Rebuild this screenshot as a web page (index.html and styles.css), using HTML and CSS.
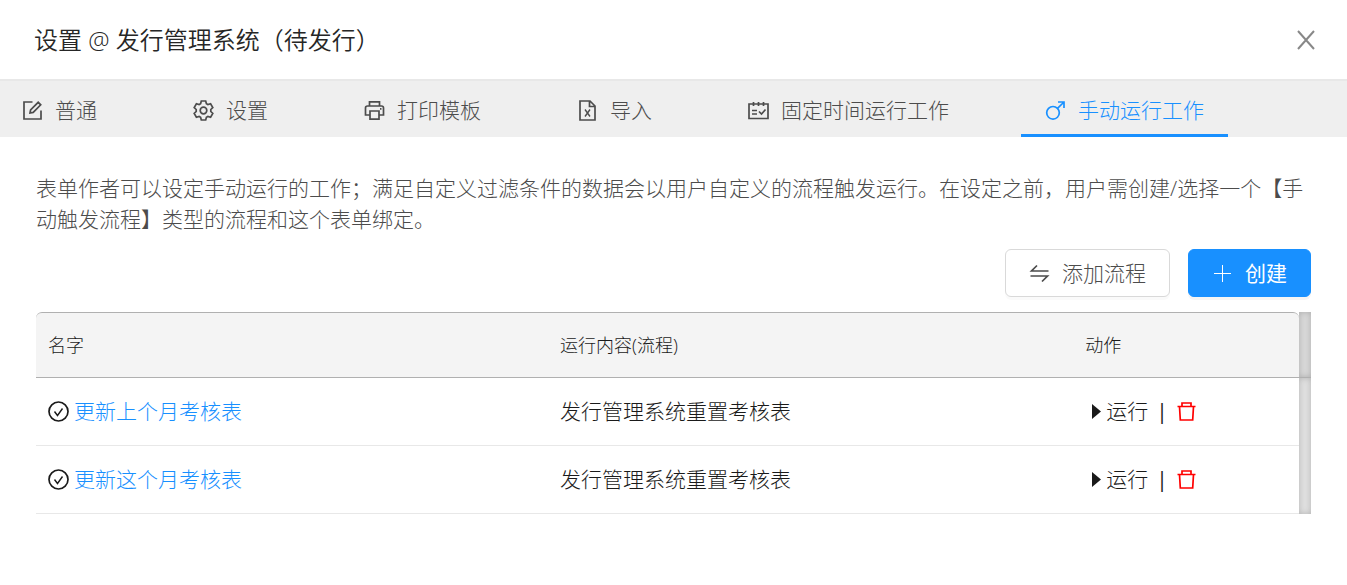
FILE: index.html
```html
<!DOCTYPE html>
<html lang="zh-CN">
<head>
    <meta charset="UTF-8">
    <meta name="viewport" content="width=device-width, initial-scale=1.0">
    <title>设置 @ 发行管理系统（待发行）</title>
    <link rel="stylesheet" href="styles.css">
</head>
<body>
    <header class="header">
        <h1>设置 @ 发行管理系统（待发行）</h1>
        <button class="close" type="button" aria-label="关闭">
            <svg viewBox="0 0 20 20"><path d="M2 1L18 19M18 1L2 19"/></svg>
        </button>
    </header>

    <nav class="tabs">
        <a class="tab" href="#general">
            <svg class="icon" viewBox="0 0 21 21"><path d="M10.500 2H2v17h17v-8.500M8 13l.6-3.200L16.200 2.300l2.500 2.500-7.500 7.600z"/></svg>
            普通
        </a>
        <a class="tab" href="#settings">
            <svg class="icon" viewBox="0 0 21 21"><path d="M8.300 1h4.400l.7 2.700 1.500.9 2.700-.8 2.200 3.700-2 2v2l2 2-2.200 3.700-2.700-.8-1.500.9-.7 2.700H8.300l-.7-2.700-1.500-.9-2.700.8-2.200-3.700 2-2v-2l-2-2 2.200-3.700 2.700.8 1.500-.9z"/><circle cx="10.500" cy="10.500" r="3.300"/></svg>
            设置
        </a>
        <a class="tab" href="#print">
            <svg class="icon" viewBox="0 0 21 21"><path d="M5.500 6V1.800h10V6M5.500 15H1.500V8q0-2 2-2h14q2 0 2 2v7h-4M6 11h9v8.200H6z"/><path d="M16 8.800h1.500"/></svg>
            打印模板
        </a>
        <a class="tab" href="#import">
            <svg class="icon" viewBox="0 0 21 21"><path d="M3 1h10l5 5v14H3zM12.500 1v5.500H18"/><path class="fine" d="M8 9.500l5 7M13 9.500l-5 7"/></svg>
            导入
        </a>
        <a class="tab" href="#schedule">
            <svg class="icon" viewBox="0 0 21 21"><path d="M1 4h19v14.500H1zM5.500 2v4M10.500 2v4M15.500 2v4M4 10.500h5M4 14h5M11 11.500l2.500 2.500 4-4.500"/></svg>
            固定时间运行工作
        </a>
        <a class="tab active" href="#manual" aria-current="page">
            <svg class="icon" viewBox="0 0 21 21"><circle cx="8" cy="12.800" r="6.300"/><path d="M12.500 8.300L19 2M13 2h6v6"/></svg>
            手动运行工作
        </a>
    </nav>

    <main class="content">
        <p class="description">表单作者可以设定手动运行的工作；满足自定义过滤条件的数据会以用户自定义的流程触发运行。在设定之前，用户需创建/选择一个【手动触发流程】类型的流程和这个表单绑定。</p>

        <div class="toolbar">
            <button class="btn" type="button">
                <svg class="icon" viewBox="0 0 21 21"><path d="M19.500 8H2.500L8 2.500M1.500 13h17L13 18.500"/></svg>
                添加流程
            </button>
            <button class="btn primary" type="button">
                <svg class="icon thin" viewBox="0 0 21 21"><path d="M10.500 2v17M2 10.500h17"/></svg>
                创建
            </button>
        </div>

        <table class="jobs">
            <thead>
                <tr>
                    <th class="name">名字</th>
                    <th class="flow">运行内容(流程)</th>
                    <th class="action">动作</th>
                    <td class="track"></td>
                </tr>
            </thead>
            <tbody>
                <tr>
                    <td>
                        <div class="cell">
                            <svg class="icon" viewBox="0 0 21 21"><circle cx="10.500" cy="10.500" r="9.500"/><path class="fine" d="M6.500 10.500l3 4 5-7"/></svg>
                            <a href="#job-1">更新上个月考核表</a>
                        </div>
                    </td>
                    <td>发行管理系统重置考核表</td>
                    <td>
                        <div class="cell actions">
                            <button class="run" type="button"><svg class="caret" viewBox="0 0 21 21"><path d="M7 3l9 7.500L7 18z"/></svg>运行</button>
                            <span class="divider">|</span>
                            <button class="delete" type="button" aria-label="删除"><svg class="icon" viewBox="0 0 21 21"><path d="M1.500 5.500h18M6 5.500V2h9v3.500M3.500 5.500l.8 13.500h12.400l.8-13.500"/></svg></button>
                        </div>
                    </td>
                    <td class="track" rowspan="2"></td>
                </tr>
                <tr>
                    <td>
                        <div class="cell">
                            <svg class="icon" viewBox="0 0 21 21"><circle cx="10.500" cy="10.500" r="9.500"/><path class="fine" d="M6.500 10.500l3 4 5-7"/></svg>
                            <a href="#job-2">更新这个月考核表</a>
                        </div>
                    </td>
                    <td>发行管理系统重置考核表</td>
                    <td>
                        <div class="cell actions">
                            <button class="run" type="button"><svg class="caret" viewBox="0 0 21 21"><path d="M7 3l9 7.500L7 18z"/></svg>运行</button>
                            <span class="divider">|</span>
                            <button class="delete" type="button" aria-label="删除"><svg class="icon" viewBox="0 0 21 21"><path d="M1.500 5.500h18M6 5.500V2h9v3.500M3.500 5.500l.8 13.500h12.400l.8-13.500"/></svg></button>
                        </div>
                    </td>
                </tr>
            </tbody>
        </table>
    </main>
</body>
</html>
```
FILE: styles.css
```css
* {
    box-sizing: border-box;
}

body {
    margin: 0;
    background: #fff;
    color: #1a1a1a;
    font-family: 'Open Sans', 'Noto Sans CJK SC', sans-serif;
    font-size: 21px;
    font-weight: 300;
    line-height: 31px;
}

a {
    color: #1890ff;
    text-decoration: none;
}

button {
    font: inherit;
    color: inherit;
    background: none;
    border: 0;
    padding: 0;
    cursor: pointer;
}

svg {
    display: block;
    flex: none;
    fill: none;
    stroke: currentColor;
    stroke-width: 1.7px;
}

.icon {
    width: 21px;
    height: 21px;
}

.fine {
    stroke-width: 1.4px;
}

.thin {
    stroke-width: 1px;
}

.header {
    display: flex;
    align-items: center;
    justify-content: space-between;
    padding: 24px 31px 24px 34px;
    border-bottom: 2px solid #e8e8e8;
}

h1 {
    margin: 0;
    font-size: 24px;
    font-weight: 350;
    line-height: 31px;
    color: #262626;
}

.close {
    color: #888;
}

.close svg {
    width: 20px;
    height: 20px;
    stroke-width: 2px;
}

.tabs {
    display: flex;
    gap: 48px;
    padding-right: 24px;
    background: #efefef;
    overflow: hidden;
}

.tab {
    display: flex;
    align-items: center;
    gap: 12px;
    height: 56px;
    padding: 5px 24px 0;
    border-bottom: 3px solid transparent;
    color: #4c4c4c;
    white-space: nowrap;
}

.tab:first-child {
    padding-left: 22px;
}

.tab.active {
    color: #1890ff;
    border-bottom-color: #1890ff;
}

.content {
    padding: 36px;
}

.description {
    margin: 0;
    color: #4c4c4c;
}

.toolbar {
    display: flex;
    justify-content: flex-end;
    gap: 18px;
    margin: 14px 0 15px;
}

.btn {
    display: flex;
    align-items: center;
    gap: 12px;
    height: 48px;
    padding: 0 23px;
    border: 1px solid #d9d9d9;
    border-radius: 6px;
    background: #fff;
    color: #4c4c4c;
    box-shadow: 0 3px 0 rgba(0, 0, 0, 0.02);
}

.btn.primary {
    border-color: #1890ff;
    background: #1890ff;
    color: #fff;
    font-weight: 400;
    box-shadow: 0 3px 0 rgba(0, 0, 0, 0.04);
}

.jobs {
    width: 100%;
    table-layout: fixed;
    border-collapse: separate;
    border-spacing: 0;
}

.jobs th,
.jobs td {
    padding: 0 12px;
    text-align: left;
    border-bottom: 1px solid #e8e8e8;
}

.jobs td {
    height: 68px;
}

.jobs thead th {
    height: 66px;
    background: #f4f4f4;
    border-top: 1px solid #b0b0b0;
    border-bottom: 1px solid #b0b0b0;
    font-size: 18px;
    font-weight: 300;
}

.jobs th.name {
    border-top-left-radius: 6px;
}

.jobs th.flow {
    width: 41.2%;
}

.jobs th.action {
    width: 17.7%;
    border-top-right-radius: 6px;
}

.jobs .track {
    width: 12px;
    padding: 0;
    border-bottom: 0;
    background: #e0e0e0;
    box-shadow: inset 0 0 6px rgba(0, 0, 0, 0.2);
}

.jobs thead .track {
    height: 66px;
    background: #d8d8d8;
    border-bottom: 1px solid #b0b0b0;
}

.cell {
    display: flex;
    align-items: center;
    gap: 5px;
}

.run {
    display: flex;
    align-items: center;
}

.caret {
    width: 21px;
    height: 21px;
    fill: currentColor;
    stroke: none;
}

.actions {
    gap: 8px;
}

.divider {
    font-weight: 400;
}

.delete {
    color: #f00;
}
```
